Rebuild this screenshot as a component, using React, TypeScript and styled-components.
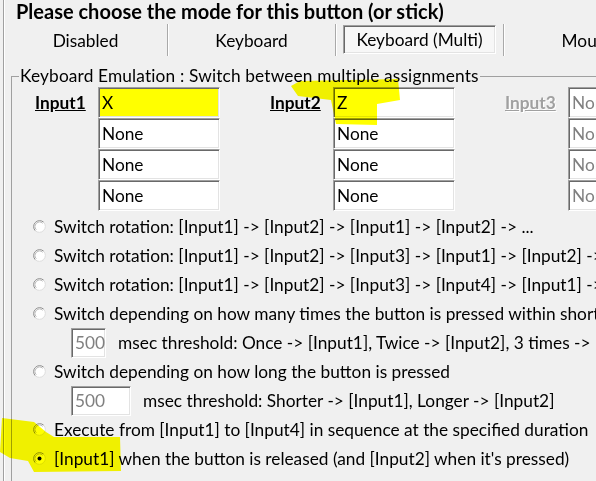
import React from 'react'
import styled, { createGlobalStyle } from 'styled-components'

const GlobalStyle = createGlobalStyle`
  html, body {
    margin: 0;
    padding: 0;
    background: #f0f0f0;
  }
  body {
    font-family: Lato, 'Open Sans', sans-serif;
    font-size: 17.3px;
    color: #000;
  }
`

const Page = styled.div`
  position: relative;
  width: 596px;
  height: 481px;
  overflow: hidden;
`

const Window = styled.div`
  height: 481px;
  margin-left: 3px;
  border-left: 1px solid #a0a0a0;
  box-shadow: inset 1px 0 0 #fff;
`

const Title = styled.h1`
  margin: 0;
  padding-left: 12px;
  height: 24px;
  line-height: 23px;
  font-size: 20px;
  font-weight: 700;
  white-space: nowrap;
`

const TabRow = styled.div`
  display: grid;
  grid-template-columns: 164px 168px 168px 168px;
  height: 32px;
`

const Tab = styled.div`
  display: flex;
  align-items: center;
  justify-content: center;
  border-right: 1px solid #a9a9a9;
  box-shadow: 1px 0 0 #fff;
  white-space: nowrap;
`

const PressedButton = styled.div`
  flex: 1;
  align-self: stretch;
  display: flex;
  align-items: center;
  justify-content: center;
  margin: 1px 7px 2px 7px;
  border: 1px solid;
  border-color: #a0a0a0 #fff #fff #a0a0a0;
  box-shadow: inset 1px 1px 0 #696969, inset -1px -1px 0 #e3e3e3;
  background: #f7f7f7;
`

const Group = styled.fieldset`
  margin: 11px 0 0 7px;
  padding: 0;
  border: none;
  border-top: 1px solid #a0a0a0;
  border-left: 1px solid #a0a0a0;
  min-width: 0;
`

const Legend = styled.legend`
  margin-left: 7px;
  padding: 0 1px;
  line-height: 18px;
  letter-spacing: 0.15px;
  white-space: nowrap;
`

const Body = styled.div`
  padding: 2px 0 0 23px;
`

const InputGrid = styled.div`
  display: flex;
  gap: 50px;
`

const InputGroup = styled.div`
  display: grid;
  grid-template-columns: 63px 122px;
  grid-auto-rows: 31px;
  flex: 0 0 auto;
`

const InputLabel = styled.span<{ $disabled?: boolean }>`
  grid-row: 1;
  align-self: center;
  font-weight: 700;
  text-decoration: underline;
  color: ${({ $disabled }) => ($disabled ? '#a0a0a0' : '#000')};
  text-shadow: ${({ $disabled }) => ($disabled ? '1px 1px 0 #fff' : 'none')};
`

const KeyBox = styled.div<{ $highlight?: boolean; $disabled?: boolean }>`
  grid-column: 2;
  box-sizing: border-box;
  display: flex;
  align-items: center;
  padding-left: 3px;
  border: 1px solid;
  border-color: #a0a0a0 #fff #fff #a0a0a0;
  box-shadow: inset 1px 1px 0 #696969, inset -1px -1px 0 #e3e3e3;
  background: ${({ $highlight }) => ($highlight ? '#ffff00' : '#fff')};
  color: ${({ $disabled }) => ($disabled ? '#808080' : '#000')};
  white-space: nowrap;
  overflow: hidden;
`

const OptionList = styled.div`
  display: flex;
  flex-direction: column;
  padding-top: 1px;
`

const OptionRow = styled.label`
  display: flex;
  align-items: center;
  gap: 8px;
  height: 29px;
  padding-left: 21px;
  white-space: nowrap;
`

const SubRow = styled.div`
  display: flex;
  align-items: center;
  gap: 12px;
  height: 29px;
  padding-left: 59px;
  white-space: nowrap;
`

const NumberBox = styled.div`
  box-sizing: border-box;
  width: 60px;
  height: 30px;
  display: flex;
  align-items: center;
  padding-left: 3px;
  border: 1px solid;
  border-color: #a0a0a0 #fff #fff #a0a0a0;
  box-shadow: inset 1px 1px 0 #696969, inset -1px -1px 0 #e3e3e3;
  background: #fff;
  color: #808080;
`

const Overlay = styled.svg`
  position: absolute;
  left: 0;
  top: 0;
  width: 596px;
  height: 481px;
  pointer-events: none;
  mix-blend-mode: multiply;
`

const Radio = ({ checked }: { checked?: boolean }) => (
  <svg width="13" height="13" viewBox="0 0 13 13" style={{ flex: '0 0 auto' }}>
    <circle cx="6.5" cy="6.5" r="6" fill="#fff" />
    <path d="M2.26 10.74 A6 6 0 0 1 10.74 2.26" fill="none" stroke="#8a8a8a" strokeWidth="1" />
    <path d="M10.74 2.26 A6 6 0 0 1 2.26 10.74" fill="none" stroke="#dcdcdc" strokeWidth="1" />
    <path d="M3.32 9.68 A4.5 4.5 0 0 1 9.68 3.32" fill="none" stroke="#b8b8b8" strokeWidth="1" />
    {checked && <circle cx="6.5" cy="6.5" r="2" fill="#000" />}
  </svg>
)

const columns = [
  { label: 'Input1', keys: ['X', 'None', 'None', 'None'], highlight: true },
  { label: 'Input2', keys: ['Z', 'None', 'None', 'None'] },
  { label: 'Input3', keys: ['None', 'None', 'None', 'None'], disabled: true },
]

export default function App() {
  return (
    <Page>
      <GlobalStyle />
      <Window>
        <Title>Please choose the mode for this button (or stick)</Title>
        <TabRow>
          <Tab>Disabled</Tab>
          <Tab>Keyboard</Tab>
          <Tab>
            <PressedButton>Keyboard (Multi)</PressedButton>
          </Tab>
          <Tab>Mouse</Tab>
        </TabRow>
        <Group>
          <Legend>Keyboard Emulation : Switch between multiple assignments</Legend>
          <Body>
            <InputGrid>
              {columns.map((col) => (
                <InputGroup key={col.label}>
                  <InputLabel $disabled={col.disabled}>{col.label}</InputLabel>
                  {col.keys.map((k, i) => (
                    <KeyBox key={i} $highlight={col.highlight && i === 0} $disabled={col.disabled}>
                      {k}
                    </KeyBox>
                  ))}
                </InputGroup>
              ))}
            </InputGrid>
          </Body>
          <OptionList>
            <OptionRow>
              <Radio />
              Switch rotation: [Input1] -&gt; [Input2] -&gt; [Input1] -&gt; [Input2] -&gt; ...
            </OptionRow>
            <OptionRow>
              <Radio />
              Switch rotation: [Input1] -&gt; [Input2] -&gt; [Input3] -&gt; [Input1] -&gt; [Input2] -&gt; ...
            </OptionRow>
            <OptionRow>
              <Radio />
              Switch rotation: [Input1] -&gt; [Input2] -&gt; [Input3] -&gt; [Input4] -&gt; [Input1] -&gt; ...
            </OptionRow>
            <OptionRow>
              <Radio />
              Switch depending on how many times the button is pressed within short time
            </OptionRow>
            <SubRow>
              <NumberBox>500</NumberBox>
              msec threshold: Once -&gt; [Input1], Twice -&gt; [Input2], 3 times -&gt; [Input3]
            </SubRow>
            <OptionRow>
              <Radio />
              Switch depending on how long the button is pressed
            </OptionRow>
            <SubRow>
              <NumberBox>500</NumberBox>
              msec threshold: Shorter -&gt; [Input1], Longer -&gt; [Input2]
            </SubRow>
            <OptionRow>
              <Radio />
              Execute from [Input1] to [Input4] in sequence at the specified duration
            </OptionRow>
            <OptionRow>
              <Radio checked />
              [Input1] when the button is released (and [Input2] when it's pressed)
            </OptionRow>
            <OptionRow>
              <Radio />
              Switch depending on analog input level
            </OptionRow>
          </OptionList>
        </Group>
      </Window>
      <Overlay viewBox="0 0 596 481">
        <path
          d="M291 86 L300 81 L398 79 L400 100 L377 104 L377 125 L336 124 L331 100 L298 96 Z"
          fill="#ffff00"
        />
        <path
          d="M2 418 L34 422 L46 432 L54 437 L120 437 L121 471 L34 472 L28 461 L10 458 L0 452 Z"
          fill="#ffff00"
        />
      </Overlay>
    </Page>
  )
}
